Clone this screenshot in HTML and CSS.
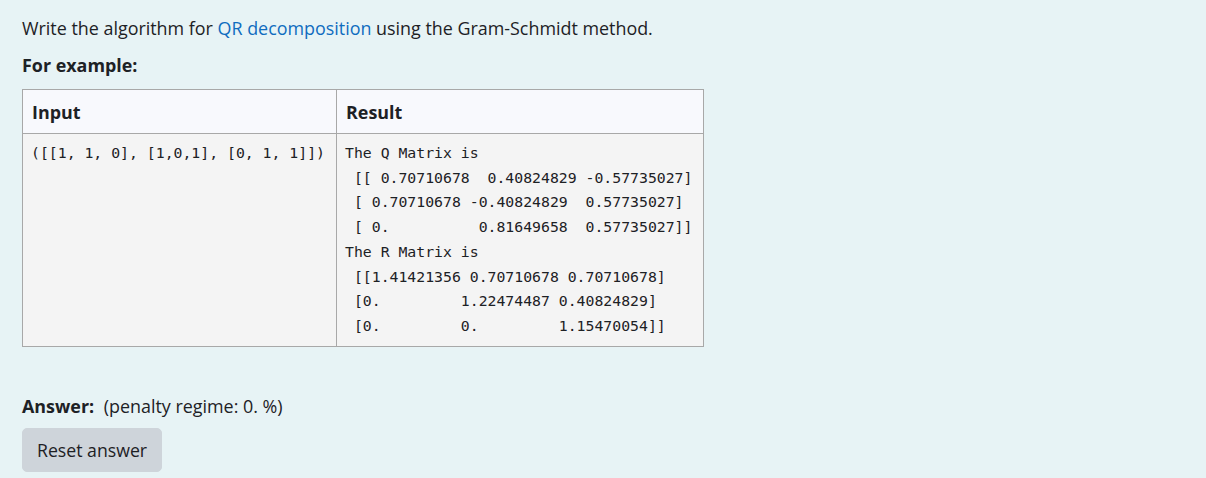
FILE: index.html
```html
<!DOCTYPE html>
<html>
<head>
<meta charset="utf-8">
<link rel="stylesheet" href="styles.css">
</head>
<body>
<div class="que">
  <p class="qtext">Write the algorithm for <a class="link" href="#">QR decomposition</a> using the Gram-Schmidt method.</p>
  <h5 class="example-title">For example:</h5>
  <table class="examples">
    <colgroup><col class="c-input"><col class="c-result"></colgroup>
    <thead>
      <tr><th>Input</th><th>Result</th></tr>
    </thead>
    <tbody>
      <tr>
        <td><pre>([[1, 1, 0], [1,0,1], [0, 1, 1]])</pre></td>
        <td><pre>The Q Matrix is
 [[ 0.70710678  0.40824829 -0.57735027]
 [ 0.70710678 -0.40824829  0.57735027]
 [ 0.          0.81649658  0.57735027]]
The R Matrix is
 [[1.41421356 0.70710678 0.70710678]
 [0.         1.22474487 0.40824829]
 [0.         0.         1.15470054]]</pre></td>
      </tr>
    </tbody>
  </table>
  <div class="answer-line"><span class="answer-label">Answer:</span> <span class="penalty">(penalty regime: 0. %)</span></div>
  <button class="reset-btn" type="button">Reset answer</button>
</div>
</body>
</html>
```
FILE: styles.css
```css
html, body {
  margin: 0;
  padding: 0;
  background: #e7f3f5;
}
body {
  font-family: "Open Sans", "Noto Sans", sans-serif;
  font-size: 17.9px;
  line-height: 26px;
  color: #1d2125;
}
.que {
  padding: 15px 22px 0 22px;
}
.qtext {
  margin: 0 0 11px 0;
}
.link {
  color: #0f6cbf;
  text-decoration: none;
}
.example-title {
  margin: 0 0 11px 0;
  font-size: 17.9px;
  font-weight: 700;
  line-height: 26px;
}
.examples {
  border-collapse: collapse;
  table-layout: fixed;
  width: 681px;
}
.c-input { width: 314px; }
.c-result { width: 367px; }
.examples th, .examples td {
  border: 1px solid #a8a8a8;
  text-align: left;
  vertical-align: top;
}
.examples th {
  background: #f8f9fd;
  font-weight: 700;
  padding: 9px 9px 8px 9px;
  line-height: 26px;
}
.examples td {
  background: #f4f4f4;
  padding: 7px 8px 7px 8px;
}
.examples pre {
  margin: 0;
  font-family: "DejaVu Sans Mono", "Liberation Mono", monospace;
  font-size: 14.8px;
  line-height: 24.7px;
  color: #1d2125;
  white-space: pre;
}
.answer-line {
  margin-top: 46px;
  line-height: 26px;
}
.answer-label {
  font-weight: 700;
  margin-right: 5px;
}
.reset-btn {
  display: block;
  margin-top: 9px;
  font-family: inherit;
  font-size: 17.7px;
  color: #1d2125;
  background: #ced4da;
  border: 1px solid #ced4da;
  border-radius: 5px;
  padding: 8px 14px;
  line-height: 26px;
}
```
